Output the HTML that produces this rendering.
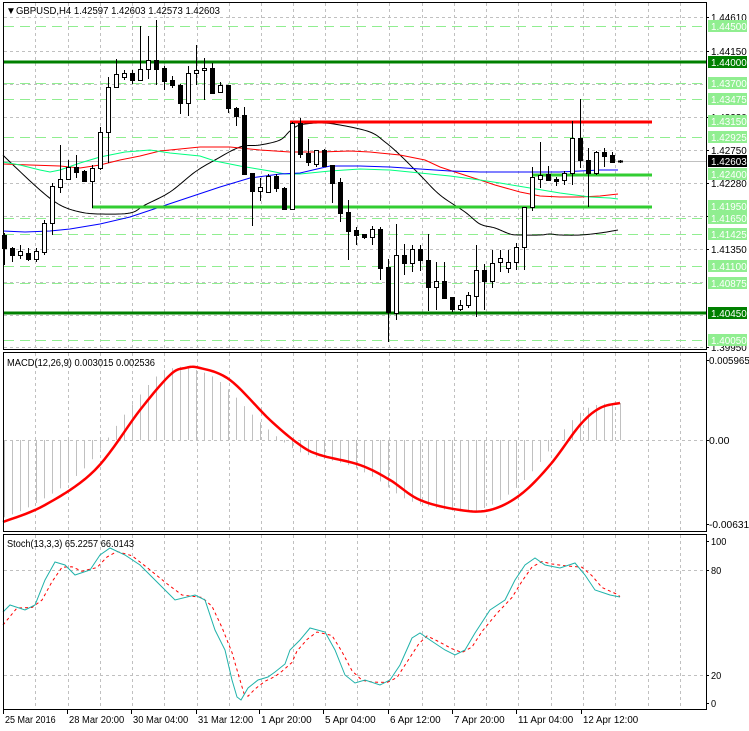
<!DOCTYPE html>
<html><head><meta charset="utf-8"><style>
html,body{margin:0;padding:0;background:#fff;}
body{width:749px;height:731px;overflow:hidden;font-family:"Liberation Sans",sans-serif;}
svg{display:block}
text{font-family:"Liberation Sans",sans-serif;font-size:10px;}
</style></head><body>
<svg id="s" width="749" height="731" viewBox="0 0 749 731" xmlns="http://www.w3.org/2000/svg">
<rect width="749" height="731" fill="#fff"/>
<g id="grid" stroke="#c0c0c0" stroke-dasharray="3,3" stroke-width="1"></g>
<g id="lg" stroke="#90ee90" stroke-dasharray="10,6" stroke-width="1"></g>
<line x1="3" y1="161.5" x2="706" y2="161.5" stroke="#c0c0c0"/>
<g id="ma" fill="none"></g>
<line x1="3" y1="62" x2="706" y2="62" stroke="#008000" stroke-width="3"/>
<line x1="3" y1="313" x2="706" y2="313" stroke="#008000" stroke-width="3"/>
<line x1="290" y1="122" x2="652" y2="122" stroke="#ff0000" stroke-width="3"/>
<line x1="532" y1="175" x2="652" y2="175" stroke="#32cd32" stroke-width="3"/>
<line x1="92" y1="207" x2="652" y2="207" stroke="#32cd32" stroke-width="3"/>
<g id="cd"></g>
<g id="ind" fill="none"></g>
<g fill="none" stroke="#000" stroke-width="1">
<rect x="3.5" y="2.5" width="703" height="347"/>
<rect x="3.5" y="352.5" width="703" height="179"/>
<rect x="3.5" y="534.5" width="703" height="175"/>
</g>
<g id="ax"></g>
<text x="6" y="14" font-size="8">▼</text>
<text x="16" y="14" fill="#000" textLength="204" lengthAdjust="spacingAndGlyphs">GBPUSD,H4  1.42597 1.42603 1.42573 1.42603</text>
<text x="7" y="366" fill="#000" textLength="148" lengthAdjust="spacingAndGlyphs">MACD(12,26,9) 0.003015 0.002536</text>
<text x="7" y="547" fill="#000" textLength="127" lengthAdjust="spacingAndGlyphs">Stoch(13,3,3) 65.2257 66.0143</text>
</svg>
<script>
var NS="http://www.w3.org/2000/svg";
function el(p,t,a,txt){var e=document.createElementNS(NS,t);for(var k in a)e.setAttribute(k,a[k]);if(txt!=null)e.textContent=txt;document.getElementById(p).appendChild(e);return e;}
var vx=[35,68,100,132,164,197,229,261,293,325,357,389,422,454,486,518,551,583,615,648,680];
vx.forEach(function(x){el('grid','line',{x1:x+.5,y1:3,x2:x+.5,y2:349});el('grid','line',{x1:x+.5,y1:353,x2:x+.5,y2:531});el('grid','line',{x1:x+.5,y1:535,x2:x+.5,y2:709});});
[17,51,84,117,150,183,216,249,282,315,347].forEach(function(y){el('grid','line',{x1:4,y1:y+.5,x2:706,y2:y+.5});});
[440,570,675].forEach(function(y){el('grid','line',{x1:4,y1:y+.5,x2:706,y2:y+.5});});
[26,83,99,137,218,234,266,283,340].forEach(function(y){el('lg','line',{x1:4,y1:y+.5,x2:706,y2:y+.5});});
function pl(g,pts,col,w,dash){var a={points:pts.map(function(p){return p.join(',')}).join(' '),stroke:col,'stroke-width':w};if(dash)a['stroke-dasharray']=dash;el(g,'polyline',a);}
function smooth(P){var o=[];for(var i=0;i<P.length-1;i++){var p0=P[Math.max(0,i-1)],p1=P[i],p2=P[i+1],p3=P[Math.min(P.length-1,i+2)];for(var t=0;t<1;t+=0.1){var t2=t*t,t3=t2*t;function f(a,b,c,d){return 0.5*((2*b)+(-a+c)*t+(2*a-5*b+4*c-d)*t2+(-a+3*b-3*c+d)*t3);}o.push([f(p0[0],p1[0],p2[0],p3[0]),f(p0[1],p1[1],p2[1],p3[1])]);}}o.push(P[P.length-1]);return o;}
pl('ma',smooth([[3,155],[10,162],[40,190],[60,205],[80,212],[100,214],[130,213],[145,205],[170,192],[195,172],[215,160],[240,147],[260,145],[280,140],[290,131],[300,125],[320,123],[340,125],[370,132],[385,142],[400,155],[420,175],[440,195],[465,212],[480,224],[495,228],[510,234],[520,235],[540,235],[550,234],[560,235],[580,235],[600,233],[618,230]]),'#000',1);
pl('ma',[[3,164],[30,165],[60,166],[80,168],[100,165],[120,160],[140,156],[160,151],[180,149],[200,147],[230,147],[260,150],[290,152],[320,152],[350,151],[370,152],[400,155],[425,160],[440,167],[455,172],[480,180],[495,185],[520,192],[540,196],[560,197],[580,197],[600,196],[618,194]],'#ff0000',1);
pl('ma',[[3,162],[20,165],[40,170],[50,172],[60,170],[80,163],[100,157],[125,152],[150,150],[170,153],[200,156],[215,161],[240,166],[270,171],[285,174],[300,174],[330,171],[360,169],[390,170],[420,173],[450,176],[480,180],[500,183],[530,188],[560,193],[590,197],[610,198],[618,199]],'#00ff7f',1);
pl('ma',[[3,231],[25,232],[50,231],[70,229],[100,224],[130,217],[160,207],[190,197],[220,187],[250,178],[280,174],[300,173],[330,166],[360,166],[390,167],[420,169],[450,171],[480,172],[510,172],[540,172],[560,172],[580,171],[600,170],[618,170]],'#0000ff',1);
var C=[[235,248,233,265],[248,255,247,262],[255,251,245,259],[253,259,248,261],[259,251,248,262],[252,223,220,255],[223,186,183,235],[187,179,145,193],[179,167,160,180],[167,172,155,178],[171,181,170,182],[181,168,165,208],[168,132,127,170],[132,87,77,163],[87,74,59,88],[77,73,70,80],[73,80,70,84],[80,69,26,80],[69,60,36,79],[60,69,20,85],[68,81,66,90],[80,85,76,88],[85,103,84,114],[103,73,66,116],[73,70,45,85],[70,68,58,100],[68,93,63,93],[92,85,82,92],[85,108,85,113],[108,116,107,126],[115,174,107,175],[173,191,173,226],[191,187,178,201],[192,176,174,193],[176,188,174,192],[188,209,187,210],[209,123,122,210],[123,154,118,158],[153,162,139,166],[164,150,150,167],[150,166,149,167],[165,183,165,203],[182,213,178,222],[212,231,200,260],[230,235,227,245],[234,237,234,239],[237,229,226,245],[229,268,227,280],[267,312,259,342],[313,255,224,320],[255,263,244,275],[263,249,245,272],[249,260,245,271],[260,287,234,311],[287,281,262,310],[281,298,262,299],[297,309,297,312],[309,305,300,311],[305,295,292,308],[296,270,245,317],[270,281,264,310],[281,263,250,288],[262,258,250,272],[268,262,250,273],[262,247,243,270],[247,207,207,270],[207,177,167,211],[179,175,142,188],[174,180,166,180],[179,181,177,186],[180,173,171,185],[173,138,121,185],[138,160,99,168],[160,173,148,207],[173,152,151,175],[152,156,148,167],[155,162,152,163],[161,161,160,163]];
C.forEach(function(c,i){var x=4+i*8,o=c[0],cl=c[1],t=Math.min(o,cl),b=Math.max(o,cl),bull=cl<o;
el('cd','line',{x1:x+.5,y1:c[2],x2:x+.5,y2:c[3],stroke:'#000'});
if(b-t<1){el('cd','line',{x1:x-2,y1:t+.5,x2:x+3,y2:t+.5,stroke:'#000','stroke-width':2});}
else el('cd','rect',{x:x-1.5,y:t+.5,width:4,height:b-t,fill:bull?'#fff':'#000',stroke:'#000'});});
var M0=[[3,522],[45,505],[95,470],[140,410],[170,375],[185,368],[200,368],[230,380],[270,420],[300,445],[320,455],[360,465],[390,480],[420,500],[460,510],[490,510],[520,495],[550,465],[580,425],[600,408],[620,403]];
var M=smooth(M0);
function mi(x){if(x<=M[0][0])return M[0][1];for(var i=1;i<M.length;i++){if(x<=M[i][0]){var a=M[i-1],b=M[i];return a[1]+(b[1]-a[1])*(x-a[0])/Math.max(0.01,(b[0]-a[0]));}}return M[M.length-1][1];}
for(var i=0;i<78;i++){var x=4+i*8+.5,v=mi(x+12);el('ind','line',{x1:x,y1:440,x2:x,y2:v,stroke:'#c0c0c0'});}
pl('ind',M,'#ff0000',2.5);
var S=[[3,612],[10,605],[25,610],[35,605],[45,580],[55,562],[65,565],[75,575],[90,570],[100,555],[110,548],[125,555],[140,565],[160,585],[175,600],[195,595],[205,600],[215,630],[225,650],[232,680],[237,697],[241,700],[248,688],[258,680],[268,677],[275,672],[285,664],[290,650],[300,640],[310,628],[325,632],[335,650],[345,675],[355,683],[365,680],[380,685],[390,680],[400,665],[412,638],[420,633],[430,640],[445,650],[455,655],[465,650],[475,633],[490,610],[505,600],[515,580],[525,565],[535,558],[545,565],[560,568],[575,563],[585,575],[595,590],[610,595],[620,597]];
var R=S.map(function(p,i){var a=S[Math.max(0,i-1)],b=S[Math.min(S.length-1,i+1)];return [Math.min(620,p[0]+7),(a[1]+2*p[1]+b[1])/4];});R[0]=[3,625];
pl('ind',R,'#ff0000',1,'3,3');
pl('ind',S,'#20b2aa',1);
function tx(x,y,c,s){el('ax','text',{x:x,y:y,fill:c,textLength:s.length*5.1,lengthAdjust:'spacingAndGlyphs'},s);}
var L=[[17,'1.44610'],[51,'1.44150'],[117,'1.43230'],[150,'1.42750'],[183,'1.42280'],[216,'1.41820'],[249,'1.41350'],[347,'1.39950']];
L.forEach(function(l){el('ax','line',{x1:706,y1:l[0]+.5,x2:709,y2:l[0]+.5,stroke:'#000'});tx(711,l[0]+4,'#000',l[1]);});
var B=[[26,'1.44500','#90ee90'],[62,'1.44000','#008000'],[83,'1.43700','#90ee90'],[99,'1.43475','#90ee90'],[121,'1.43150','#90ee90'],[137,'1.42925','#90ee90'],[161,'1.42603','#000'],[174,'1.42400','#90ee90'],[206,'1.41950','#90ee90'],[218,'1.41650','#90ee90'],[234,'1.41425','#90ee90'],[266,'1.41100','#90ee90'],[283,'1.40875','#90ee90'],[313,'1.40450','#008000'],[340,'1.40050','#90ee90']];
B.forEach(function(b){el('ax','rect',{x:708,y:b[0]-6,width:39,height:12,fill:b[2]});tx(711,b[0]+4,'#fff',b[1]);});
[[360,'0.005965'],[440,'0.00'],[524,'-0.006316']].forEach(function(l){el('ax','line',{x1:706,y1:l[0]+.5,x2:709,y2:l[0]+.5,stroke:'#000'});tx(709,l[0]+4,'#000',l[1]);});
[[541,'100'],[570,'80'],[675,'20'],[703,'0']].forEach(function(l){el('ax','line',{x1:706,y1:l[0]+.5,x2:709,y2:l[0]+.5,stroke:'#000'});tx(711,l[0]+4,'#000',l[1]);});
[[3,'25 Mar 2016'],[67,'28 Mar 20:00'],[131,'30 Mar 04:00'],[196,'31 Mar 12:00'],[259,'1 Apr 20:00'],[323,'5 Apr 04:00'],[388,'6 Apr 12:00'],[452,'7 Apr 20:00'],[516,'11 Apr 04:00'],[581,'12 Apr 12:00']].forEach(function(t){el('ax','line',{x1:t[0]+.5,y1:710,x2:t[0]+.5,y2:714,stroke:'#000'});el('ax','text',{x:t[0]+2,y:723,fill:'#000',textLength:t[1].length*4.6,lengthAdjust:'spacingAndGlyphs'},t[1]);});
</script>
</body></html>
